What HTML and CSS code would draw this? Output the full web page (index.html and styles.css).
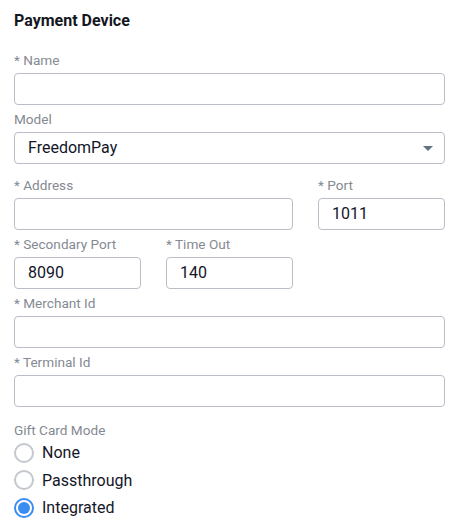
FILE: index.html
```html
<!DOCTYPE html>
<html>
<head>
<meta charset="utf-8">
<link rel="stylesheet" href="styles.css">
</head>
<body>
<div class="page">
  <h1 class="title">Payment Device</h1>
  <div class="grid">
    <div class="field span3">
      <label class="label">* Name</label>
      <div class="input"></div>
    </div>
    <div class="field span3 select-field">
      <label class="label">Model</label>
      <div class="input select">
        <span>FreedomPay</span>
        <span class="caret"></span>
      </div>
    </div>
    <div class="field span2">
      <label class="label">* Address</label>
      <div class="input"></div>
    </div>
    <div class="field">
      <label class="label">* Port</label>
      <div class="input">1011</div>
    </div>
    <div class="field">
      <label class="label">* Secondary Port</label>
      <div class="input">8090</div>
    </div>
    <div class="field">
      <label class="label">* Time Out</label>
      <div class="input">140</div>
    </div>
    <div class="field empty"></div>
    <div class="field span3">
      <label class="label">* Merchant Id</label>
      <div class="input"></div>
    </div>
    <div class="field span3">
      <label class="label">* Terminal Id</label>
      <div class="input"></div>
    </div>
  </div>
  <div class="radio-group">
    <div class="label group-label">Gift Card Mode</div>
    <div class="radio"><span class="dot"></span><span>None</span></div>
    <div class="radio"><span class="dot"></span><span>Passthrough</span></div>
    <div class="radio"><span class="dot checked"></span><span>Integrated</span></div>
  </div>
</div>
</body>
</html>
```

FILE: styles.css
```css
* { box-sizing: border-box; }
html, body { margin: 0; padding: 0; background: #ffffff; }
body {
  font-family: Roboto, "Noto Sans", sans-serif;
  color: #1b1d2a;
}
.page {
  width: 466px;
  padding: 11px 21px 0 14px;
}
.title {
  margin: 0;
  font-size: 16px;
  font-weight: 700;
  line-height: 20px;
  color: #15171f;
}
.grid {
  margin-top: 21px;
  display: grid;
  grid-template-columns: 1fr 1fr 1fr;
  column-gap: 25px;
}
.span3 { grid-column: span 3; }
.span2 { grid-column: span 2; }
.field { display: flex; flex-direction: column; }
.label {
  display: block;
  font-size: 13.6px;
  line-height: 17px;
  color: #858a92;
  margin: 6px 0 4px;
}
.field:first-child .label { margin-top: 0; }
.input {
  height: 32px;
  border: 1px solid #b9bec6;
  border-radius: 4px;
  padding: 0 13px;
  font-size: 16px;
  line-height: 30px;
  color: #141628;
  background: #fff;
}
.select-field { margin-bottom: 7px; }
.select {
  display: flex;
  align-items: center;
  justify-content: space-between;
  padding-right: 11px;
}
.caret {
  width: 0;
  height: 0;
  border-left: 5px solid transparent;
  border-right: 5px solid transparent;
  border-top: 5px solid #627282;
}
.radio-group { padding-top: 15px; }
.group-label { margin: 0; }
.radio {
  display: flex;
  align-items: center;
  height: 27.5px;
  font-size: 16px;
  color: #141628;
}
.dot {
  width: 20px;
  height: 20px;
  border-radius: 50%;
  border: 2px solid #c3c7ce;
  margin-right: 8px;
  flex: none;
  position: relative;
}
.dot.checked {
  border-color: #3a8cf2;
}
.dot.checked::after {
  content: "";
  position: absolute;
  left: 2px;
  top: 2px;
  width: 12px;
  height: 12px;
  border-radius: 50%;
  background: #3a8cf2;
}
```
